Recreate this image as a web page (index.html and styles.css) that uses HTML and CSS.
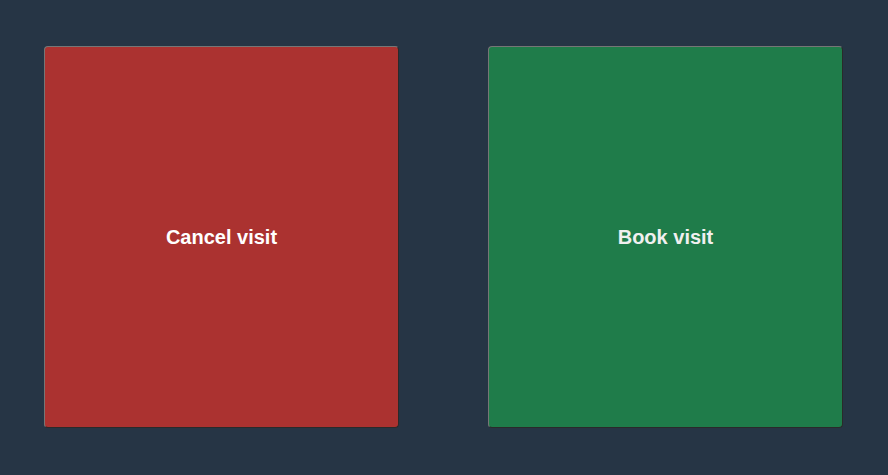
FILE: index.html
```html
<!DOCTYPE html>
<html>
<head>
<meta charset="utf-8">
<link rel="stylesheet" href="styles.css">
</head>
<body>
<div class="panel">
  <button class="tile tile-cancel">Cancel visit</button>
  <button class="tile tile-book">Book visit</button>
</div>
</body>
</html>
```

FILE: styles.css
```css
html, body {
  margin: 0;
  padding: 0;
  background: #263545;
  height: 100%;
}
.panel {
  display: flex;
  gap: 89px;
  padding: 46px 45px 47px 44px;
}
.tile {
  width: 355px;
  height: 382px;
  box-sizing: border-box;
  border-radius: 4px;
  border: 1px solid;
  border-color: #767676 #2a2a2a #2a2a2a #767676;
  font-family: "Liberation Sans", Arial, sans-serif;
  font-weight: bold;
  font-size: 20px;
  color: #ffffff;
  display: flex;
  align-items: center;
  justify-content: center;
  padding: 1px 0 0 0;
  cursor: pointer;
}
.tile-cancel {
  background: #ab3230;
}
.tile-book {
  background: #1f7c4a;
  color: #f0f0f0;
}
```
